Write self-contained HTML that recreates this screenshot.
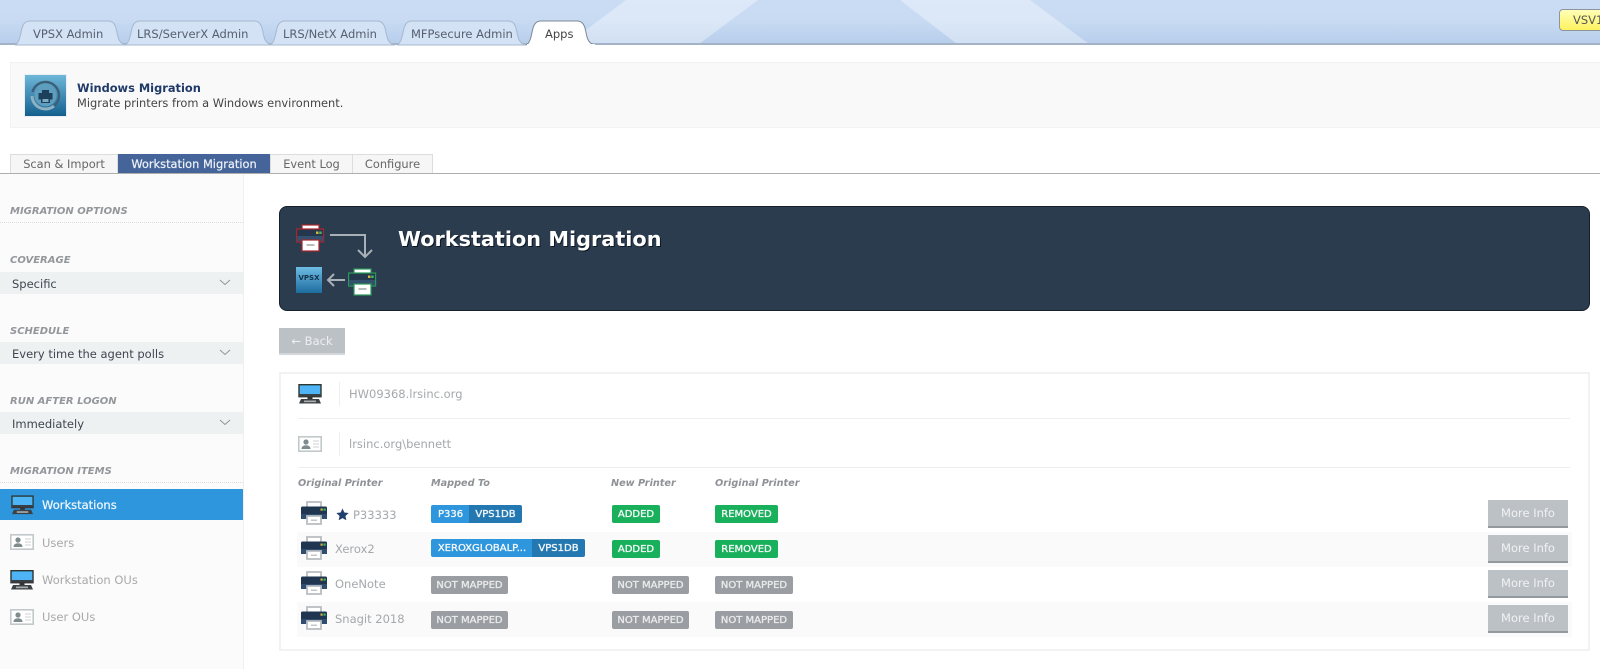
<!DOCTYPE html>
<html><head><meta charset="utf-8"><title>Workstation Migration</title>
<style>
html,body{margin:0;padding:0;background:#fff}
body{width:1600px;height:669px;overflow:hidden;position:relative;font-family:"DejaVu Sans","Liberation Sans",sans-serif;font-size:11.4px;color:#444}
.a{position:absolute;white-space:nowrap}
.c{line-height:16px;margin-top:-8px}
.tabt{color:#566070;font-size:11.5px;line-height:16px;top:26px}
.st{position:absolute;top:154px;height:19px;line-height:19px;text-align:center;background:#f6f6f6;border:1px solid #ddd;border-bottom:0;box-sizing:content-box;color:#666;font-size:11.4px}
.lab{position:absolute;left:10px;font-weight:bold;font-style:italic;font-size:10px;color:#93969a;line-height:12px;margin-top:-5px;white-space:nowrap}
.dot{position:absolute;left:0;width:243px;border-top:1px dotted #ddd}
.sel{position:absolute;left:0;width:243px;height:22px;line-height:24px;background:#eef1f2;color:#3e4650;font-size:11.5px;text-indent:12px}
.sel svg{position:absolute;left:219px;top:7px}
.side{position:absolute;left:42px;font-size:11.5px;color:#a8a8a8;line-height:16px;margin-top:-8px}
.hd{position:absolute;top:478px;font-weight:bold;font-style:italic;font-size:9.7px;color:#8e9196;line-height:12px;white-space:nowrap}
.stripe{position:absolute;left:297px;width:1275px;height:35px;background:#fafafa}
.b{position:absolute;height:18px;line-height:19px;color:#f2f6f8;font-weight:normal;font-size:10px;-webkit-text-stroke:.35px currentColor;text-align:center;box-sizing:border-box;border-radius:2px;white-space:nowrap}
.bl{background:#2d96dd}.dk{background:#2478b2}.gr{background:#18b05a}.gy{background:#9a9da1;color:#e9eaeb}
.more{position:absolute;left:1488px;width:80px;height:26px;line-height:27px;background:#bcc1c5;border-bottom:2px solid #94999e;color:#f1f2f3;text-align:center;font-size:11.5px}
.pn{position:absolute;color:#a5a8ab;font-size:11.5px;line-height:16px;margin-top:-9px;white-space:nowrap}
svg{position:absolute;display:block}
</style></head>
<body>
<svg width="0" height="0" style="position:absolute">
<defs>
<symbol id="pr" viewBox="0 0 26 24">
<path d="M6 1h14v7H6z" fill="#fff" stroke="#b9bdc0" stroke-width="1.8"/>
<path d="M0 7q0-1.500 1.500-1.500h23q1.500 0 1.500 1.500V18H0z" fill="#1f3550"/>
<rect x="0" y="13" width="26" height="5" fill="#2f4d6e"/>
<rect x="19.500" y="7.500" width="2.200" height="2.200" fill="#d4b23a"/><rect x="22.500" y="7.500" width="2.200" height="2.200" fill="#3bb56b"/>
<path d="M6 15h14v8H6z" fill="#fff" stroke="#b9bdc0" stroke-width="1.800"/>
<rect x="10" y="18.500" width="6" height="1.500" fill="#c4c7ca"/>
</symbol>
<symbol id="pc" viewBox="0 0 24 20">
<rect x="1" y="0.700" width="22" height="12" fill="#36c0f0" stroke="#333" stroke-width="1.400"/>
<rect x="2" y="2" width="20" height="9.500" fill="#4fb4f5"/>
<rect x="1" y="10" width="22" height="2.500" fill="#3a3f44"/>
<rect x="9.500" y="13" width="5" height="2" fill="#333"/>
<path d="M3 15h18l2 4.500H1z" fill="#3c4145"/>
<path d="M6 16.500h12v1.700H6z" fill="#a9adb0"/>
</symbol>
<symbol id="us" viewBox="0 0 24 16">
<rect x="0.800" y="0.800" width="22.400" height="14.400" fill="#fff" stroke="#c3c8cb" stroke-width="1.600"/>
<circle cx="8" cy="6" r="2.600" fill="#7f8c8d"/>
<path d="M3.500 13q0-3.800 4.500-3.800t4.500 3.800z" fill="#7f8c8d"/>
<path d="M15 5h6M15 8h6M15 11h6" stroke="#ccd0d3" stroke-width="1"/>
</symbol>
<symbol id="ch" viewBox="0 0 12 7"><path d="M1 1l5 4.500L11 1" fill="none" stroke="#8d969c" stroke-width="1"/></symbol>
<linearGradient id="ig" x1="0" y1="0" x2="0" y2="1"><stop offset="0" stop-color="#6fb8da"/><stop offset="1" stop-color="#125f8e"/></linearGradient>
</defs>
</svg>

<!-- top header -->
<div class="a" style="left:0;top:0;width:1600px;height:44px;background:linear-gradient(#cadcf4 0%,#c8dbf3 45%,#b7ceeb 100%)"></div>
<svg style="left:0;top:0" width="1600" height="44"><polygon points="626,0 758,0 699,44 567,44" fill="#fff" opacity=".36"/><polygon points="900,0 1030,0 1089,44 957,44" fill="#fff" opacity=".36"/></svg>
<div class="a" style="left:0;top:43px;width:1600px;height:2px;background:#a4b2c6"></div>

<!-- tabs -->
<svg style="left:0;top:18px" width="610" height="30">
<g fill="#d4e2f5" stroke="#a6b8d0" stroke-width="1">
<path d="M15 27q3-1 5-8l2-9q2-7 8-7h78q6 0 8 7l2 9q2 7 8 8z"/>
<path d="M125 27q3-1 5-8l2-9q2-7 8-7h114q6 0 8 7l2 9q2 7 8 8z"/>
<path d="M270 27q3-1 5-8l2-9q2-7 8-7h92q6 0 8 7l2 9q2 7 8 8z"/>
<path d="M397 27q3-1 5-8l2-9q2-7 8-7h96q6 0 8 7l2 9q2 7 8 8z"/>
</g>
<path d="M526 27q3-1 5-8l2-9q2-7 8-7h36q6 0 8 7l2 9q2 7 8 8" fill="#fff" stroke="#7d8896" stroke-width="1"/>
<rect x="527" y="26" width="68" height="3" fill="#fff"/>
</svg>
<div class="a tabt" style="left:33px">VPSX Admin</div>
<div class="a tabt" style="left:137px">LRS/ServerX Admin</div>
<div class="a tabt" style="left:283px">LRS/NetX Admin</div>
<div class="a tabt" style="left:411px">MFPsecure Admin</div>
<div class="a tabt" style="left:545px;color:#444">Apps</div>

<!-- VSV -->
<div class="a" style="left:1559px;top:9px;width:60px;height:22px;box-sizing:border-box;border:1px solid #8e949b;border-radius:4px;background:linear-gradient(#ffffb8,#fdf25e);line-height:20px;text-indent:13px;color:#555;font-size:11.5px">VSV1</div>

<!-- info box -->
<div class="a" style="left:10px;top:62px;width:1600px;height:66px;box-sizing:border-box;background:#f9f9f9;border:1px solid #f2f2f2"></div>
<svg style="left:24px;top:74px" width="43" height="43" viewBox="0 0 43 43">
<rect x=".5" y=".5" width="42" height="42" fill="url(#ig)" stroke="#e8eef2"/>
<circle cx="21.500" cy="21.500" r="11" fill="#5f9dbd"/>
<path d="M21.500 8a13.500 13.500 0 0 1 13.500 13.500 13.500 13.500 0 0 1-5 10.500" fill="none" stroke="#3d5f78" stroke-width="2.500"/>
<path d="M21.500 8a13.500 13.500 0 0 0-13 10" fill="none" stroke="#3d5f78" stroke-width="2.500"/>
<path d="M8 22a13.500 13.500 0 0 0 22 10" fill="none" stroke="#8fb0c2" stroke-width="3"/>
<path d="M18 16h7v3h3.500v6.500H26V29h-9v-3.500h-2.500V19H18z" fill="#1c3f5c"/>
<rect x="18.500" y="25" width="6" height="3" fill="#7da9c1"/>
</svg>
<div class="a c" style="left:77px;top:88px;font-weight:bold;color:#1f3a68;font-size:11.4px">Windows Migration</div>
<div class="a c" style="left:77px;top:103px;color:#444;font-size:11.4px">Migrate printers from a Windows environment.</div>

<!-- subtabs -->
<div class="st" style="left:10px;width:106px">Scan &amp; Import</div>
<div class="st" style="left:118px;width:152px;background:#45659a;border:0;height:20px;color:#eef2f7;line-height:20px;-webkit-text-stroke:.2px #eef2f7">Workstation Migration</div>
<div class="st" style="left:270px;width:81px">Event Log</div>
<div class="st" style="left:352px;width:79px">Configure</div>
<div class="a" style="left:0;top:173px;width:1600px;height:1px;background:#aeaeae"></div>

<!-- sidebar -->
<div class="a" style="left:0;top:174px;width:243px;height:495px;background:#fbfbfb;border-right:1px solid #efefef"></div>
<div class="lab" style="top:211px">MIGRATION OPTIONS</div>
<div class="dot" style="top:222px"></div>
<div class="lab" style="top:260px">COVERAGE</div>
<div class="sel" style="top:272px">Specific<svg width="12" height="7"><use href="#ch"/></svg></div>
<div class="lab" style="top:331px">SCHEDULE</div>
<div class="sel" style="top:342px">Every time the agent polls<svg width="12" height="7"><use href="#ch"/></svg></div>
<div class="lab" style="top:401px">RUN AFTER LOGON</div>
<div class="sel" style="top:412px">Immediately<svg width="12" height="7"><use href="#ch"/></svg></div>
<div class="lab" style="top:471px">MIGRATION ITEMS</div>
<div class="dot" style="top:482px"></div>
<div class="a" style="left:0;top:489px;width:243px;height:31px;background:#2d96dd"></div>
<svg style="left:11px;top:495px" width="23" height="20"><use href="#pc"/></svg>
<div class="side" style="top:505px;color:#f2f8fd;-webkit-text-stroke:.2px #f2f8fd">Workstations</div>
<svg style="left:10px;top:534px" width="24" height="16"><use href="#us"/></svg>
<div class="side" style="top:543px">Users</div>
<svg style="left:10px;top:570px" width="24" height="20"><use href="#pc"/></svg>
<div class="side" style="top:580px">Workstation OUs</div>
<svg style="left:10px;top:609px" width="24" height="16"><use href="#us"/></svg>
<div class="side" style="top:617px">User OUs</div>

<!-- banner -->
<div class="a" style="left:279px;top:206px;width:1311px;height:105px;box-sizing:border-box;background:#2b3c4f;border:1px solid #16202c;border-radius:8px"></div>
<svg style="left:296px;top:224px" width="90" height="76" viewBox="0 0 90 76">
<g>
<rect x="6" y="1" width="17" height="7" fill="#fff" stroke="#a8262b" stroke-width="1.200"/>
<rect x=".6" y="5" width="27" height="13" fill="#24374c" stroke="#a8262b" stroke-width="1.200"/>
<rect x="1.200" y="12" width="25.800" height="5.400" fill="#35506e"/>
<rect x="20" y="7.500" width="2.500" height="2.500" fill="#d8b43c"/><rect x="23.200" y="7.500" width="2.500" height="2.500" fill="#3bb56b"/>
<rect x="6" y="16" width="17" height="11" fill="#fff" stroke="#a8262b" stroke-width="1.200"/>
<rect x="10.500" y="20" width="8" height="2" fill="#bbb"/>
</g>
<path d="M34 11h35v22M62 26l7 7 7-7" fill="none" stroke="#a9b1b8" stroke-width="2"/>
<g transform="translate(52,44)">
<rect x="6" y="1" width="17" height="7" fill="#fff" stroke="#2a9a58" stroke-width="1.200"/>
<rect x=".6" y="5" width="27" height="13" fill="#24374c" stroke="#2a9a58" stroke-width="1.200"/>
<rect x="1.200" y="12" width="25.800" height="5.400" fill="#35506e"/>
<rect x="20" y="7.500" width="2.500" height="2.500" fill="#d8b43c"/><rect x="23.200" y="7.500" width="2.500" height="2.500" fill="#3bb56b"/>
<rect x="6" y="16" width="17" height="11" fill="#fff" stroke="#2a9a58" stroke-width="1.200"/>
<rect x="10.500" y="20" width="8" height="2" fill="#bbb"/>
</g>
<defs><linearGradient id="vg" x1="0" y1="0" x2="0" y2="1"><stop offset="0" stop-color="#6dbce4"/><stop offset="1" stop-color="#1d6c9f"/></linearGradient></defs>
<rect x="0" y="43" width="26" height="26" fill="url(#vg)"/>
<text x="13" y="56" text-anchor="middle" font-family="DejaVu Sans" font-weight="bold" font-size="7" fill="#15304a">VPSX</text>
<path d="M49 56H32M38 50l-6 6 6 6" fill="none" stroke="#a9b1b8" stroke-width="2"/>
</svg>
<div class="a" style="left:398px;top:227px;font-size:20.8px;line-height:24px;font-weight:bold;color:#fff;text-shadow:1px 1px 0 #0c1622">Workstation Migration</div>

<!-- back -->
<div class="a" style="left:279px;top:328px;width:66px;height:25px;line-height:26px;background:#bcc1c5;border-bottom:2px solid #d4d7da;color:#eef0f1;text-align:center;font-size:11.5px">← Back</div>

<!-- card -->
<div class="a" style="left:279px;top:372px;width:1311px;height:279px;box-sizing:border-box;border:2px solid #f2f2f2"></div>
<svg style="left:298px;top:384px" width="24" height="20"><use href="#pc"/></svg>
<div class="a" style="left:339px;top:382px;width:1px;height:24px;background:#eee"></div>
<div class="a c" style="left:349px;top:394px;color:#a5a8ab;font-size:11.5px">HW09368.lrsinc.org</div>
<div class="a" style="left:298px;top:418px;width:1272px;height:1px;background:#eee"></div>
<svg style="left:298px;top:436px" width="24" height="16"><use href="#us"/></svg>
<div class="a" style="left:339px;top:432px;width:1px;height:24px;background:#eee"></div>
<div class="a c" style="left:349px;top:444px;color:#a5a8ab;font-size:11.5px">lrsinc.org\bennett</div>
<div class="a" style="left:298px;top:467px;width:1272px;height:1px;background:#eee"></div>
<div class="hd" style="left:298px">Original Printer</div>
<div class="hd" style="left:431px">Mapped To</div>
<div class="hd" style="left:611px">New Printer</div>
<div class="hd" style="left:715px">Original Printer</div>

<div class="stripe" style="top:532px"></div>
<div class="stripe" style="top:602px"></div>

<svg style="left:301px;top:501px" width="26" height="24"><use href="#pr"/></svg>
<svg style="left:336px;top:508px" width="13" height="13" viewBox="0 0 24 24"><path d="M12 1l3.400 7.400 8 .9-6 5.400 1.700 8L12 18.700 4.900 22.700l1.700-8-6-5.400 8-.9z" fill="#1f3f6e"/></svg>
<div class="pn" style="left:353px;top:516px">P33333</div>
<svg style="left:301px;top:536px" width="26" height="24"><use href="#pr"/></svg>
<div class="pn" style="left:335px;top:550px">Xerox2</div>
<svg style="left:301px;top:571px" width="26" height="24"><use href="#pr"/></svg>
<div class="pn" style="left:335px;top:585px">OneNote</div>
<svg style="left:301px;top:606px" width="26" height="24"><use href="#pr"/></svg>
<div class="pn" style="left:335px;top:620px">Snagit 2018</div>

<div class="b bl" style="left:431px;top:505px;width:39px;border-radius:2px 0 0 2px">P336</div>
<div class="b dk" style="left:469px;top:505px;width:53px;border-radius:0 2px 2px 0">VPS1DB</div>
<div class="b bl" style="left:431px;top:539px;width:102px;border-radius:2px 0 0 2px">XEROXGLOBALP...</div>
<div class="b dk" style="left:532px;top:539px;width:53px;border-radius:0 2px 2px 0">VPS1DB</div>
<div class="b gy" style="left:431px;top:576px;width:77px">NOT MAPPED</div>
<div class="b gy" style="left:431px;top:611px;width:77px">NOT MAPPED</div>

<div class="b gr" style="left:612px;top:505px;width:48px">ADDED</div>
<div class="b gr" style="left:612px;top:540px;width:48px">ADDED</div>
<div class="b gy" style="left:612px;top:576px;width:77px">NOT MAPPED</div>
<div class="b gy" style="left:612px;top:611px;width:77px">NOT MAPPED</div>

<div class="b gr" style="left:715px;top:505px;width:63px">REMOVED</div>
<div class="b gr" style="left:715px;top:540px;width:63px">REMOVED</div>
<div class="b gy" style="left:715px;top:576px;width:78px">NOT MAPPED</div>
<div class="b gy" style="left:715px;top:611px;width:78px">NOT MAPPED</div>

<div class="more" style="top:500px">More Info</div>
<div class="more" style="top:535px">More Info</div>
<div class="more" style="top:570px">More Info</div>
<div class="more" style="top:605px">More Info</div>
</body></html>
